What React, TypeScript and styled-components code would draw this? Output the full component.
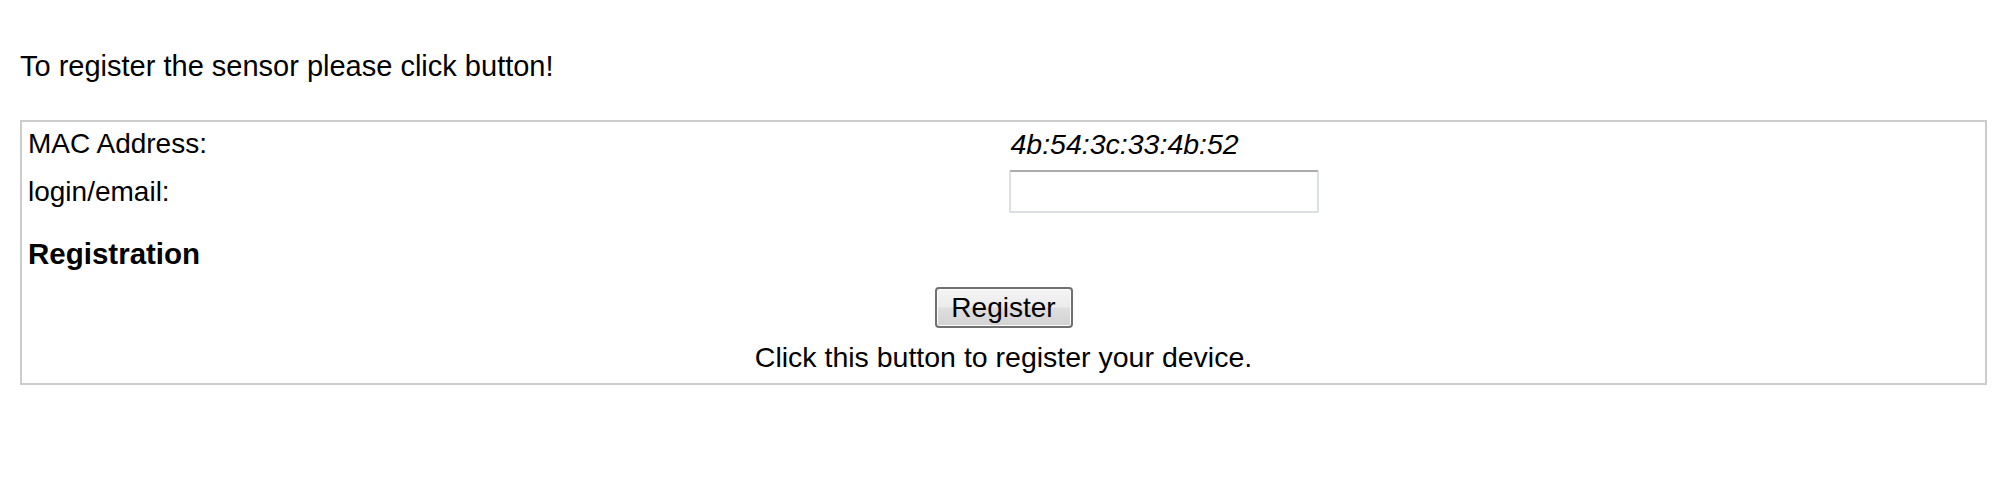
import React from "react";
import styled, { createGlobalStyle } from "styled-components";

const Global = createGlobalStyle`
  html, body {
    margin: 0;
    padding: 0;
    background: #ffffff;
  }
  body {
    font-family: "Liberation Sans", Arial, sans-serif;
    font-size: 28px;
    line-height: 32px;
    color: #000000;
  }
`;

const Page = styled.div`
  padding: 50px 25px 0 20px;
`;

const Intro = styled.p`
  margin: 0 0 38px;
  font-size: 29px;
`;

const Panel = styled.div`
  border: 2px solid #cccccc;
  display: flex;
  flex-direction: column;
  padding-bottom: 10px;
`;

const FieldRow = styled.div<{ $pad: string }>`
  display: grid;
  grid-template-columns: 1fr 1fr;
  align-items: center;
  padding: ${(p) => p.$pad};
`;

const Label = styled.span`
  padding-left: 6px;
`;

const Value = styled.span<{ $italic?: boolean }>`
  padding-left: ${(p) => (p.$italic ? "7px" : "5px")};
  font-style: ${(p) => (p.$italic ? "italic" : "normal")};
  font-size: ${(p) => (p.$italic ? "28.5px" : "28px")};
`;

const TextInput = styled.input`
  box-sizing: border-box;
  width: 310px;
  height: 43px;
  margin: 0;
  border: 2px solid #dcdfe4;
  border-top-color: #acacac;
  border-radius: 2px;
  background: #ffffff;
  font: inherit;
  padding: 0 6px;
  outline: none;
`;

const SectionTitle = styled.div`
  font-weight: bold;
  font-size: 29.5px;
  padding-left: 6px;
  margin-top: 19px;
`;

const Center = styled.div`
  display: flex;
  flex-direction: column;
  align-items: center;
  margin-top: 17px;
  gap: 13px;
`;

const Button = styled.button`
  box-sizing: border-box;
  width: 138px;
  height: 41px;
  margin: 0;
  padding: 0;
  font-family: "Liberation Sans", Arial, sans-serif;
  font-size: 28px;
  line-height: 32px;
  color: #000000;
  border: 2px solid #707070;
  border-radius: 4px;
  background: linear-gradient(
    to bottom,
    #f4f4f4 0%,
    #ececec 48%,
    #dedede 52%,
    #d3d3d3 100%
  );
  box-shadow: inset 0 0 0 1px #fbfbfb;
`;

const Hint = styled.div`
  font-size: 28.5px;
`;

export default function App() {
  return (
    <>
      <Global />
      <Page>
        <Intro>To register the sensor please click button!</Intro>
        <Panel>
          <FieldRow $pad="6px 0 4px">
            <Label>MAC Address:</Label>
            <Value $italic>4b:54:3c:33:4b:52</Value>
          </FieldRow>
          <FieldRow $pad="6px 0 6px">
            <Label>login/email:</Label>
            <Value>
              <TextInput type="text" />
            </Value>
          </FieldRow>
          <SectionTitle>Registration</SectionTitle>
          <Center>
            <Button type="button">Register</Button>
            <Hint>Click this button to register your device.</Hint>
          </Center>
        </Panel>
      </Page>
    </>
  );
}
